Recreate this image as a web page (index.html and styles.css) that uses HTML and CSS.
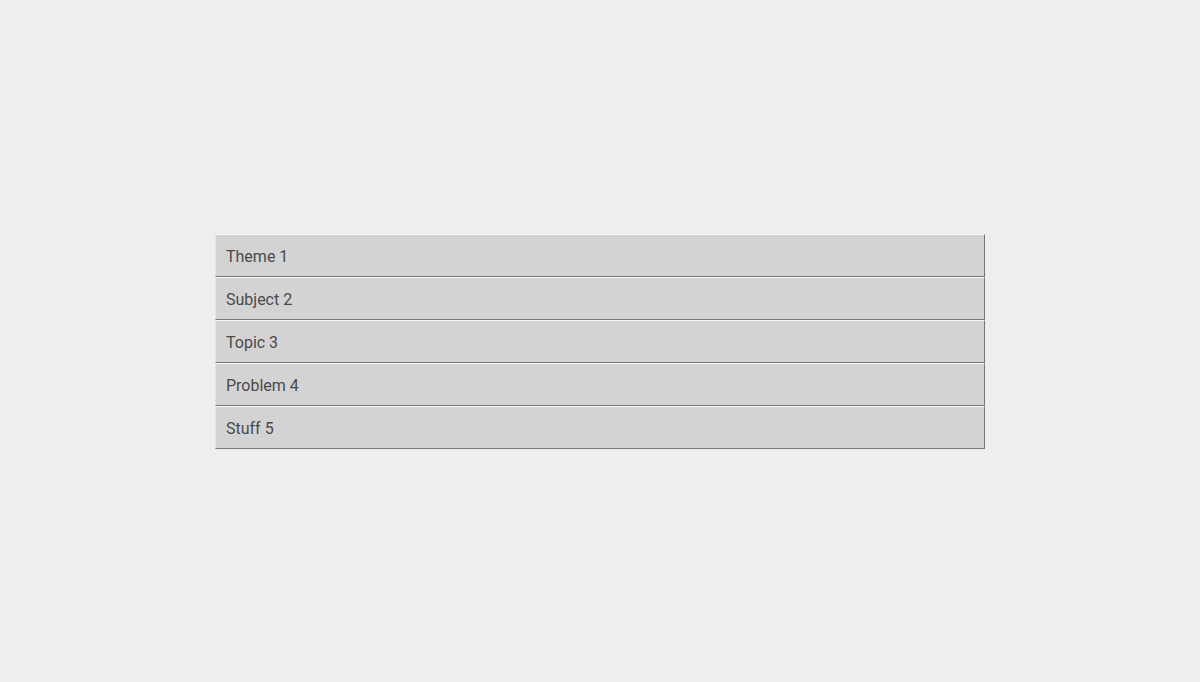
FILE: index.html
```html
<!DOCTYPE html>
<html>
  <head lang="en">
    <meta charset="utf-8"/>
    <title>List</title>
    <link rel="stylesheet" href="styles.css">
  </head>
  <body>
    <div class="page">
      <ul class="list">
        <li class="item">Theme 1</li>
        <li class="item">Subject 2</li>
        <li class="item">Topic 3</li>
        <li class="item">Problem 4</li>
        <li class="item">Stuff 5</li>
      </ul>
    </div>
  </body>
</html>
```
FILE: styles.css
```css
body {
  margin: 0;
  background-color: #eeeeee;
  font-family: Roboto, "Noto Sans", sans-serif;
}

.page {
  height: 682px;
  display: flex;
  align-items: center;
  justify-content: center;
}

.list {
  list-style: none;
  margin: 0;
  padding: 0;
  width: 770px;
}

.item {
  box-sizing: border-box;
  height: 43px;
  line-height: 41px;
  padding: 1px 0 0 10px;
  background-color: #d3d3d3;
  color: #4a4a4a;
  font-size: 16px;
  border-top: 1px solid #f8f8f8;
  border-left: 1px solid #e4e4e4;
  border-right: 1px solid #777777;
  border-bottom: 1px solid #777777;
}
```
